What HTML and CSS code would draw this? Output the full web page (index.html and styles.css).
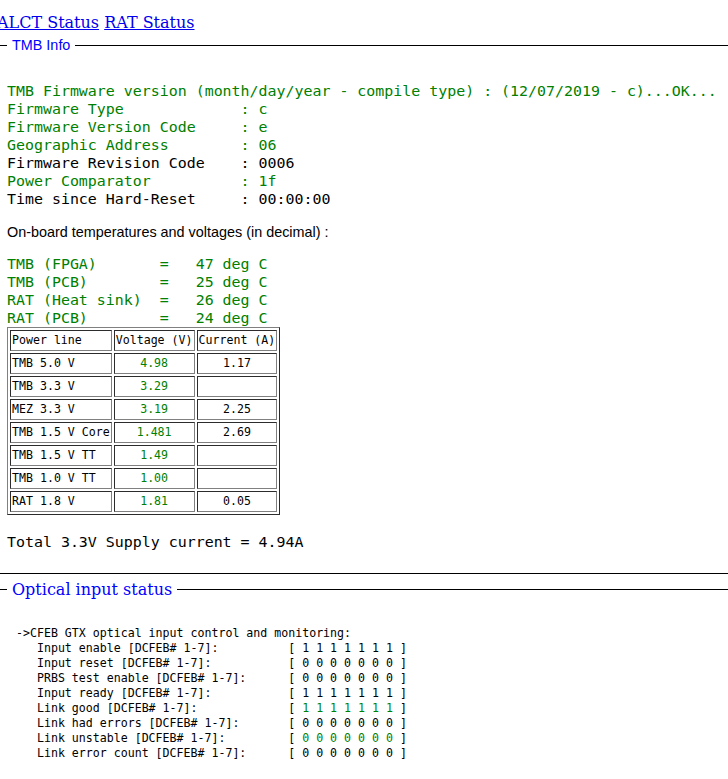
FILE: index.html
```html
<!DOCTYPE html>
<html>
<head>
<meta charset="utf-8">
<title>TMB Status</title>
<link rel="stylesheet" href="styles.css">
</head>
<body>
<div class="nav"><a href="#">ALCT Status</a> <a href="#">RAT Status</a></div>
<fieldset class="box box-tmb">
<legend class="legend legend-sans">TMB Info</legend>
<pre class="mono info"><span class="g">TMB Firmware version (month/day/year - compile type) : (12/07/2019 - c)...OK...</span>
<span class="g">Firmware Type             : c</span>
<span class="g">Firmware Version Code     : e</span>
<span class="g">Geographic Address        : 06</span>
<span class="k">Firmware Revision Code    : 0006</span>
<span class="g">Power Comparator          : 1f</span>
<span class="k">Time since Hard-Reset     : 00:00:00</span></pre>
<p class="sans onboard">On-board temperatures and voltages (in decimal) :</p>
<pre class="mono temps"><span class="g">TMB (FPGA)       =   47 deg C</span>
<span class="g">TMB (PCB)        =   25 deg C</span>
<span class="g">RAT (Heat sink)  =   26 deg C</span>
<span class="g">RAT (PCB)        =   24 deg C</span></pre>
<table class="power">
<tr><td>Power line</td><td>Voltage (V)</td><td>Current (A)</td></tr>
<tr><td>TMB 5.0 V</td><td class="v">4.98</td><td class="c">1.17</td></tr>
<tr><td>TMB 3.3 V</td><td class="v">3.29</td><td class="c"></td></tr>
<tr><td>MEZ 3.3 V</td><td class="v">3.19</td><td class="c">2.25</td></tr>
<tr><td>TMB 1.5 V Core</td><td class="v">1.481</td><td class="c">2.69</td></tr>
<tr><td>TMB 1.5 V TT</td><td class="v">1.49</td><td class="c"></td></tr>
<tr><td>TMB 1.0 V TT</td><td class="v">1.00</td><td class="c"></td></tr>
<tr><td>RAT 1.8 V</td><td class="v">1.81</td><td class="c">0.05</td></tr>
</table>
<pre class="mono total">Total 3.3V Supply current = 4.94A</pre>
</fieldset>
<fieldset class="box box-opt">
<legend class="legend legend-serif">Optical input status</legend>
<pre class="small">-&gt;CFEB GTX optical input control and monitoring:
   Input enable [DCFEB# 1-7]:          [ 1 1 1 1 1 1 1 ]
   Input reset [DCFEB# 1-7]:           [ 0 0 0 0 0 0 0 ]
   PRBS test enable [DCFEB# 1-7]:      [ 0 0 0 0 0 0 0 ]
   Input ready [DCFEB# 1-7]:           [ 1 1 1 1 1 1 1 ]
   Link good [DCFEB# 1-7]:             [ <span class="g">1 1 1 1 1 1 1</span> ]
   Link had errors [DCFEB# 1-7]:       [ 0 0 0 0 0 0 0 ]
   Link unstable [DCFEB# 1-7]:         [ <span class="g">0 0 0 0 0 0 0</span> ]
   Link error count [DCFEB# 1-7]:      [ 0 0 0 0 0 0 0 ]</pre>
</fieldset>
</body>
</html>
```
FILE: styles.css
```css
html, body {
  margin: 0;
  padding: 0;
  background: #ffffff;
  color: #000000;
}

body {
  font-family: "DejaVu Serif", serif;
  font-size: 16px;
  overflow: hidden;
}

.nav {
  margin: 13px 0 0 -3px;
  font-family: "DejaVu Serif", serif;
  font-size: 16px;
  line-height: 19px;
  white-space: nowrap;
}

.nav a {
  color: #0000ee;
  text-decoration: underline;
}

.box {
  margin: 5px 0 0 0;
  padding: 0 0 0 7px;
  border: none;
  border-top: 1px solid #000000;
  border-bottom: 1px solid #000000;
  min-width: 0;
}

.box-tmb {
  padding-bottom: 22px;
}

.box-opt {
  margin-top: 6px;
  padding-bottom: 40px;
}

.legend {
  padding: 0 5px;
  color: #0000ff;
}

.legend-sans {
  font-family: "Liberation Sans", Arial, sans-serif;
  font-size: 14.4px;
  line-height: 17px;
}

.legend-serif {
  font-family: "DejaVu Serif", serif;
  font-size: 16px;
  line-height: 19px;
}

.mono {
  font-family: "DejaVu Sans Mono", monospace;
  font-size: 14.93px;
  line-height: 18px;
  margin: 0;
  white-space: pre;
}

.info {
  margin-top: 28px;
}

.sans {
  font-family: "Liberation Sans", Arial, sans-serif;
  font-size: 14.4px;
  line-height: 17px;
}

.onboard {
  margin: 16px 0 0 0;
}

.temps {
  margin-top: 14px;
}

.total {
  margin-top: 18px;
}

.g {
  color: #008000;
}

.k {
  color: #000000;
}

.power {
  border: 1px outset #808080;
  border-collapse: separate;
  border-spacing: 2px;
  font-family: "DejaVu Sans Mono", monospace;
  font-size: 11.6px;
  line-height: 17px;
}

.power td {
  border: 1px inset #808080;
  padding: 1px;
  white-space: nowrap;
}

.power td.v {
  text-align: center;
  color: #008000;
}

.power td.c {
  text-align: center;
}

.small {
  font-family: "DejaVu Sans Mono", monospace;
  font-size: 11.6px;
  line-height: 15px;
  margin: 27px 0 0 9px;
  white-space: pre;
}
```
